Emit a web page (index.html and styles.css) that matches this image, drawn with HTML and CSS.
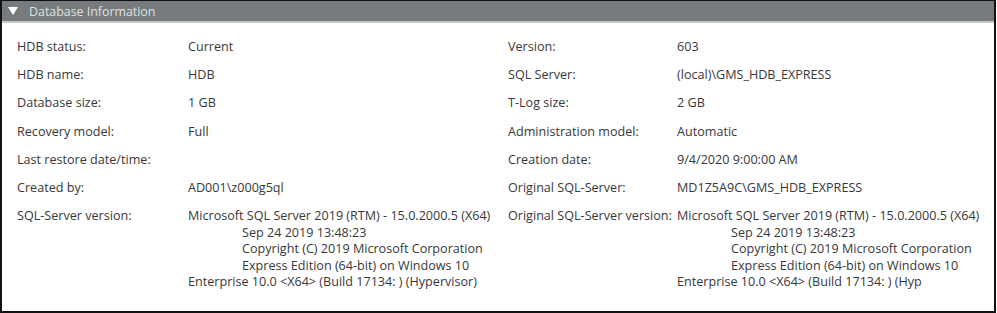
FILE: index.html
```html
<!DOCTYPE html>
<html>
<head>
<meta charset="utf-8">
<link rel="stylesheet" href="styles.css">
</head>
<body>
<div class="panel">
  <div class="header">
    <span class="arrow"></span>
    <span class="title">Database Information</span>
  </div>
  <div class="content">
    <div class="lbl">HDB status:</div><div class="val">Current</div>
    <div class="lbl">Version:</div><div class="val">603</div>

    <div class="lbl">HDB name:</div><div class="val">HDB</div>
    <div class="lbl">SQL Server:</div><div class="val">(local)\GMS_HDB_EXPRESS</div>

    <div class="lbl">Database size:</div><div class="val">1 GB</div>
    <div class="lbl">T-Log size:</div><div class="val">2 GB</div>

    <div class="lbl">Recovery model:</div><div class="val">Full</div>
    <div class="lbl">Administration model:</div><div class="val">Automatic</div>

    <div class="lbl">Last restore date/time:</div><div class="val"></div>
    <div class="lbl">Creation date:</div><div class="val">9/4/2020 9:00:00 AM</div>

    <div class="lbl">Created by:</div><div class="val">AD001\z000g5ql</div>
    <div class="lbl">Original SQL-Server:</div><div class="val">MD1Z5A9C\GMS_HDB_EXPRESS</div>

    <div class="lbl">SQL-Server version:</div>
    <div class="val multi">
      <div>Microsoft SQL Server 2019 (RTM) - 15.0.2000.5 (X64)</div>
      <div class="ind">Sep 24 2019 13:48:23</div>
      <div class="ind">Copyright (C) 2019 Microsoft Corporation</div>
      <div class="ind">Express Edition (64-bit) on Windows 10</div>
      <div>Enterprise 10.0 &lt;X64&gt; (Build 17134: ) (Hypervisor)</div>
    </div>
    <div class="lbl">Original SQL-Server version:</div>
    <div class="val multi">
      <div>Microsoft SQL Server 2019 (RTM) - 15.0.2000.5 (X64)</div>
      <div class="ind">Sep 24 2019 13:48:23</div>
      <div class="ind">Copyright (C) 2019 Microsoft Corporation</div>
      <div class="ind">Express Edition (64-bit) on Windows 10</div>
      <div>Enterprise 10.0 &lt;X64&gt; (Build 17134: ) (Hyp</div>
    </div>
  </div>
</div>
</body>
</html>
```
FILE: styles.css
```css
html, body {
  margin: 0;
  padding: 0;
  background: #ffffff;
}
.panel {
  box-sizing: border-box;
  width: 996px;
  height: 313px;
  border: 1px solid #111;
  border-left-width: 2px;
  border-bottom-width: 2px;
  border-right-width: 2px;
  font-family: "Open Sans", "Noto Sans", sans-serif;
  color: #383838;
  overflow: hidden;
}
.header {
  height: 20px;
  background: #767b7d;
  border-bottom: 2px solid #c8cacb;
  display: flex;
  align-items: center;
  padding-left: 6px;
}
.arrow {
  width: 0;
  height: 0;
  border-left: 5px solid transparent;
  border-right: 5px solid transparent;
  border-top: 8px solid #ffffff;
  margin-right: 11px;
}
.title {
  color: #dfe1e2;
  font-size: 12.4px;
  line-height: 20px;
  padding-top: 1px;
}
.content {
  display: grid;
  grid-template-columns: 171px 320px 169px 1fr;
  row-gap: 11.7px;
  padding: 16px 0 0 15px;
  font-size: 12.6px;
  line-height: 16.5px;
}
.lbl, .val {
  white-space: nowrap;
}
.ind {
  padding-left: 54px;
}
```
